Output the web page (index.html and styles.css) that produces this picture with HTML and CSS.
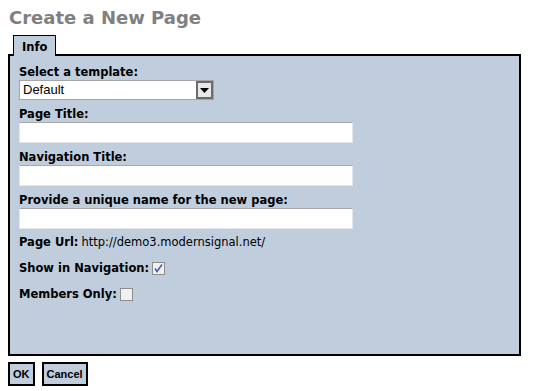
FILE: index.html
```html
<!DOCTYPE html>
<html lang="en">
<head>
    <meta charset="UTF-8">
    <title>Create a New Page</title>
    <link rel="stylesheet" href="styles.css">
</head>
<body>

<h1 class="title">Create a New Page</h1>

<div class="tabs">
    <span class="tab">Info</span>
</div>

<div class="panel">
    <div class="field">
        <label class="label">Select a template:</label>
        <div class="select">
            <span class="select-text">Default</span>
            <span class="select-btn">
                <svg width="9" height="5" viewBox="0 0 9 5"><path d="M0 0h9L4.5 5z" fill="#000"/></svg>
            </span>
        </div>
    </div>

    <div class="field">
        <label class="label">Page Title:</label>
        <input class="text-input" type="text">
    </div>

    <div class="field">
        <label class="label">Navigation Title:</label>
        <input class="text-input" type="text">
    </div>

    <div class="field last">
        <label class="label">Provide a unique name for the new page:</label>
        <input class="text-input" type="text">
    </div>

    <div class="row"><b>Page Url:</b> http://demo3.modernsignal.net/</div>

    <div class="row">
        <b>Show in Navigation:</b>
        <span class="check">
            <svg width="11" height="11" viewBox="0 0 11 11"><path d="M2 5.5l2 3 5-7" fill="none" stroke="#4b5fa6" stroke-width="1.6"/></svg>
        </span>
    </div>

    <div class="row">
        <b>Members Only:</b>
        <span class="check"></span>
    </div>
</div>

<div class="buttons">
    <button class="btn">OK</button>
    <button class="btn">Cancel</button>
</div>

</body>
</html>
```

FILE: styles.css
```css
body { margin: 8px; font-family: "DejaVu Sans", Verdana, sans-serif; font-size: 11.5px; color: #000; background: #fff; }

/* Page heading */
.title { font-size: 18px; font-weight: bold; color: #808080; margin: 0 0 8px 1px; line-height: 19px; }

/* Tab strip */
.tabs { display: flex; padding-left: 5px; }
.tab { display: block; background: #bfcddd; border: 1px solid #000; border-bottom: none; padding: 4px 8px 0 8px; font-weight: bold; line-height: 14px; margin-bottom: -2px; position: relative; z-index: 1; height: 21px; box-sizing: border-box; }

/* Main panel */
.panel { width: 513px; height: 302px; box-sizing: border-box; border: 2px solid #000; background: #bfcddd; padding: 9px 9px 0; }

.field { margin-bottom: 7px; }
.field.last { margin-bottom: 6px; }
.label { display: block; font-weight: bold; line-height: 14px; margin-bottom: 1px; }

.text-input { display: block; width: 334px; height: 21px; box-sizing: border-box; margin: 0; border: 1px solid #e2e6ea; border-top-color: #a9a9a9; background: #fff; }

/* Fake dropdown */
.select { display: flex; width: 195px; height: 20px; box-sizing: border-box; border: 1px solid #a5a5a5; background: #fff; }
.select-text { flex: 1; font-family: "Liberation Sans", Arial, sans-serif; font-size: 13px; line-height: 18px; padding-left: 3px; }
.select-btn { width: 17px; height: 18px; box-sizing: border-box; border: 2px solid #6b6b6b; background: #e8e8e8; display: flex; align-items: center; justify-content: center; }

.row { line-height: 14px; margin: 0 0 12px; display: flex; align-items: center; gap: 3px; }
.row b { font-weight: bold; }
.check { width: 13px; height: 13px; box-sizing: border-box; border: 1px solid #8c8c8c; background: #f0f0f0; display: flex; align-items: center; justify-content: center; }

/* Buttons */
.buttons { display: flex; gap: 7px; margin-top: 6px; }
.btn { height: 24px; box-sizing: border-box; border: 2px solid #000; background: #bfcddd; font-family: "Liberation Sans", Arial, sans-serif; font-weight: bold; font-size: 11px; padding: 0 3px; color: #000; }
```
